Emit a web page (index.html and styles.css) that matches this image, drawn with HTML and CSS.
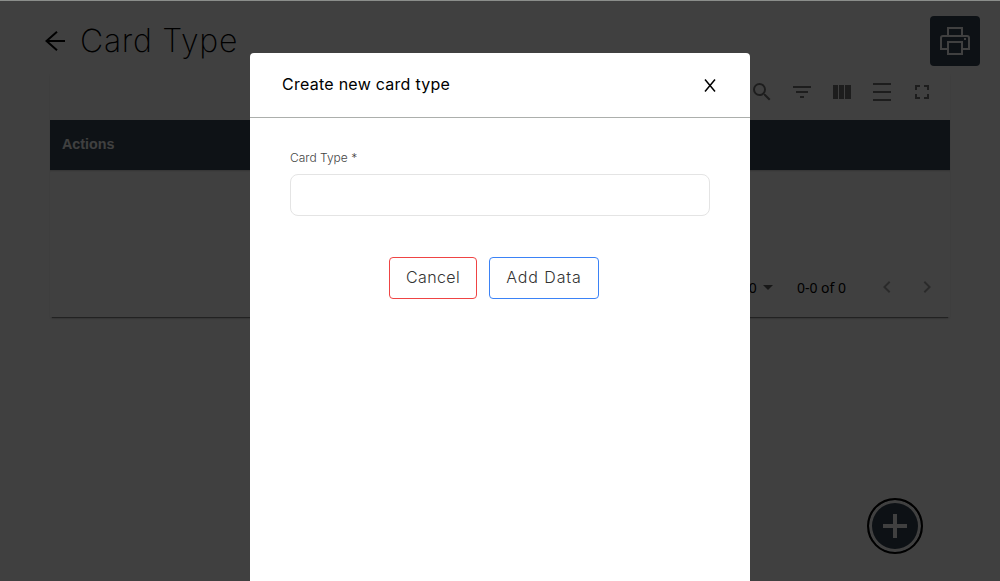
FILE: index.html
```html
<!DOCTYPE html>
<html lang="en">
<head>
<meta charset="utf-8">
<title>Card Type</title>
<link rel="stylesheet" href="styles.css">
</head>
<body>
<main class="page">
  <header class="page-header">
    <svg class="back" viewBox="0 0 20 20"><path d="M20 10H1.500M12 .8 1.500 10 12 19.200" fill="none" stroke="#000" stroke-width="2"/></svg>
    <h1 class="title">Card Type</h1>
    <button class="print" aria-label="Print"><svg width="32" height="32" viewBox="0 0 32 32" fill="none" stroke="#fff" stroke-width="2"><path d="M9 11V3h14v8M8 24H2V13q0-2 2-2h24q2 0 2 2v11h-6"/><path d="M9 17h14v12H9z"/><path d="M25 14h2"/></svg></button>
  </header>
  <section class="table">
    <div class="toolbar">
      <svg viewBox="0 0 24 24"><path d="M15.500 14h-.79l-.28-.27A6.471 6.471 0 0 0 16 9.500 6.500 6.500 0 1 0 9.500 16c1.610 0 3.090-.59 4.230-1.570l.27.28v.79l5 4.990L20.490 19l-4.990-5zm-6 0C7.010 14 5 11.990 5 9.500S7.010 5 9.500 5 14 7.010 14 9.500 11.990 14 9.500 14z"/></svg>
      <svg viewBox="0 0 24 24"><path d="M10 18h4v-2h-4v2zM3 6v2h18V6H3zm3 7h12v-2H6v2z"/></svg>
      <svg viewBox="0 0 24 24"><path d="M3 5h5v14H3zM9 5h5v14H9zM15 5h6v14h-6z"/></svg>
      <svg viewBox="0 0 24 24"><path d="M3 3h18v2H3zM3 11h18v2H3zM3 19h18v2H3z"/></svg>
      <svg viewBox="0 0 24 24"><path d="M7 14H5v5h5v-2H7v-3zm-2-4h2V7h3V5H5v5zm12 7h-3v2h5v-5h-2v3zM14 5v2h3v3h2V5h-5z"/></svg>
    </div>
    <div class="table-head">Actions</div>
    <div class="table-body"></div>
    <div class="pagination">
      <span class="size">10</span>
      <svg class="caret" viewBox="0 0 10 5"><path d="M0 0h10L5 5z"/></svg>
      <span class="range">0-0 of 0</span>
      <svg class="nav" viewBox="0 0 24 24"><path d="M15.410 7.410 14 6l-6 6 6 6 1.410-1.410L10.830 12z"/></svg>
      <svg class="nav" viewBox="0 0 24 24"><path d="M10 6 8.590 7.410 13.170 12l-4.580 4.590L10 18l6-6z"/></svg>
    </div>
  </section>
  <button class="fab" aria-label="Add"><svg width="24" height="24" viewBox="0 0 24 24"><path d="M10 0h4v10h10v4H14v10h-4V14H0v-4h10z" fill="#fff"/></svg></button>
</main>
<div class="overlay">
  <section class="modal">
    <header class="modal-header"><h2 class="modal-title">Create new card type</h2><button class="close" aria-label="Close"><svg width="12" height="13" viewBox="0 0 12 13"><path d="M1 .5 11 12.500M11 .5 1 12.500" stroke="#000" stroke-width="1.500"/></svg></button></header>
    <form class="form">
      <label class="label" for="card">Card Type *</label>
      <input class="input" id="card" type="text">
      <div class="actions"><button class="btn cancel" type="button">Cancel</button><button class="btn add" type="button">Add Data</button></div>
    </form>
  </section>
</div>
</body>
</html>
```
FILE: styles.css
```css
* { box-sizing: border-box; }
body { margin: 0; height: 581px; overflow: hidden; background: #fff; font-family: Inter, "Liberation Sans", sans-serif; color: #000; }
button { padding: 0; font: inherit; }
.page { height: 581px; }
.page-header { height: 72px; padding: 16px 20px 0 45px; display: flex; align-items: flex-start; }
.back { width: 20px; height: 20px; margin-top: 15px; }
.title { margin: 5px 0 0 15px; font-size: 32px; line-height: 40px; font-weight: 200; letter-spacing: .7px; white-space: nowrap; }
.print { width: 50px; height: 50px; margin-left: auto; border: 0; border-radius: 4px; background: #344454; display: flex; align-items: center; justify-content: center; }
.table { width: 900px; height: 245px; margin-left: 50px; box-shadow: 0 3px 1px -2px rgba(0,0,0,.4), 0 2px 3px -1px rgba(0,0,0,.2); }
.toolbar { height: 48px; padding: 8px 16px 0; display: flex; justify-content: flex-end; gap: 16px; }
.toolbar svg { width: 24px; height: 24px; fill: #757575; }
.table-head { height: 50px; padding-left: 12px; background: #384858; color: #fff; font: bold 14.300px/49px "Liberation Sans", Arial, sans-serif; }
.table-body { height: 89px; box-shadow: inset 0 2px 2px -1px rgba(0,0,0,.2); }
.pagination { height: 56px; padding-right: 11px; display: flex; align-items: center; justify-content: flex-end; font: 14px "Noto Sans", sans-serif; }
.caret { width: 10px; height: 5px; margin: 0 24px 0 6px; fill: #606060; }
.nav { width: 24px; height: 24px; margin-left: 16px; fill: #a8a8a8; }
.range { margin-right: 13px; }
.fab { position: absolute; left: 867px; top: 498px; width: 56px; height: 56px; border: 2px solid #000; border-radius: 50%; background: #344454; box-shadow: inset 0 0 0 3px #fff; display: flex; align-items: center; justify-content: center; }
.overlay { position: absolute; inset: 0; padding-top: 52px; background: rgba(0,0,0,.75); border-top: 1px solid #8b8e8b; display: flex; justify-content: center; }
.modal { width: 500px; height: 528px; background: #fff; border-radius: 4px 4px 0 0; }
.modal-header { height: 65px; padding: 0 34px 0 32px; display: flex; align-items: center; justify-content: space-between; border-bottom: 1px solid #acafac; }
.modal-title { margin: 0 0 2px; font-size: 16px; font-weight: 400; letter-spacing: .26px; }
.close { width: 12px; height: 13px; border: 0; background: none; display: flex; }
.form { padding: 30px 40px; display: flex; flex-direction: column; }
.label { height: 26px; font-size: 12px; line-height: 20px; font-weight: 300; color: #444; }
.input { width: 100%; height: 42px; border: 1px solid #e4e4e4; border-radius: 8px; background: #fff; }
.actions { margin-top: 41px; padding-left: 99px; display: flex; gap: 12px; }
.btn { height: 42px; padding-bottom: 2px; border: 1px solid; border-radius: 4px; background: #fff; color: #333; font-size: 16px; line-height: 38px; font-weight: 300; white-space: nowrap; }
.cancel { width: 88px; border-color: #ef4444; letter-spacing: .4px; }
.add { width: 110px; border-color: #3b82f6; letter-spacing: .9px; }
```
